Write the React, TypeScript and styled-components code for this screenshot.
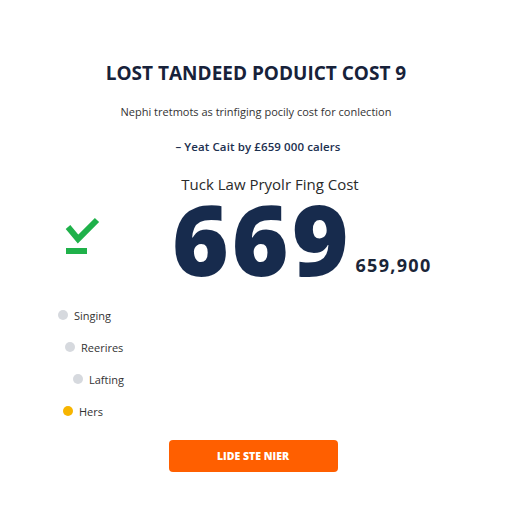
import React from 'react';
import styled, {createGlobalStyle} from "styled-components";

const GlobalStyle = createGlobalStyle`
  html, body {
    margin: 0;
    padding: 0;
    background: #ffffff;
  }
  body {
    font-family: "Open Sans", "Noto Sans", sans-serif;
  }
`;

const steps = [
  {label: 'Singing', indent: 58, active: false},
  {label: 'Reerires', indent: 65, active: false},
  {label: 'Lafting', indent: 73, active: false},
  {label: 'Hers', indent: 63, active: true},
];

const App: React.FC = () => {
  return (
    <>
      <GlobalStyle/>
      <Page>
        <Title>LOST TANDEED PODUICT COST 9</Title>
        <Subtitle>Nephi tretmots as trinfiging pocily cost for conlection</Subtitle>
        <YearLine>– Yeat Cait by £659 000 calers</YearLine>
        <CostLabel>Tuck Law Pryolr Fing Cost</CostLabel>

        <FigureRow>
          <CheckBox>
            <svg width="40" height="42" viewBox="0 0 40 42">
              <path d="M5 13 L15 25 L34 6" fill="none" stroke="#1fb14a" strokeWidth="6"/>
              <rect x="3" y="34" width="21" height="6" fill="#1fb14a"/>
            </svg>
          </CheckBox>
          <BigNumber>669</BigNumber>
          <SmallNumber>659,900</SmallNumber>
        </FigureRow>

        <StepList>
          {steps.map(s =>
            <StepRow key={s.label} indent={s.indent}>
              <Dot active={s.active}/>
              <StepText>{s.label}</StepText>
            </StepRow>
          )}
        </StepList>

        <ButtonWrap>
          <ActionButton>LIDE STE NIER</ActionButton>
        </ButtonWrap>
      </Page>
    </>
  );
};

const Page = styled.div`
  width: 512px;
  height: 512px;
  box-sizing: border-box;
  padding-top: 61px;
  display: flex;
  flex-direction: column;
  color: #1b2538;
`;

const Title = styled.div`
  text-align: center;
  font-size: 19px;
  line-height: 24px;
  font-weight: 700;
  color: #17223a;
`;

const Subtitle = styled.div`
  margin-top: 19px;
  text-align: center;
  font-size: 11px;
  line-height: 16px;
  color: #333333;
`;

const YearLine = styled.div`
  margin-top: 19px;
  text-align: center;
  font-size: 11.5px;
  line-height: 16px;
  font-weight: 600;
  color: #1c3050;
  letter-spacing: 0.1px;
  padding-left: 4px;
`;

const CostLabel = styled.div`
  margin-top: 21px;
  text-align: center;
  font-size: 15px;
  line-height: 16px;
  color: #2a2a2a;
  padding-left: 28px;
`;

const FigureRow = styled.div`
  display: flex;
  align-items: flex-end;
  padding-left: 63px;
  margin-top: 1px;
`;

const CheckBox = styled.div`
  width: 40px;
  height: 42px;
  align-self: flex-start;
  margin-top: 21px;
  margin-right: 69px;
`;

const BigNumber = styled.div`
  font-size: 97px;
  line-height: 90px;
  font-weight: 800;
  color: #172b4d;
  letter-spacing: 3px;
`;

const SmallNumber = styled.div`
  margin-left: 4px;
  margin-bottom: 9px;
  font-size: 18px;
  line-height: 18px;
  font-weight: 700;
  color: #1b2538;
  letter-spacing: 1.3px;
`;

const StepList = styled.div`
  margin-top: 16px;
  display: flex;
  flex-direction: column;
`;

const StepRow = styled.div<{indent: number}>`
  display: flex;
  align-items: center;
  height: 32px;
  padding-left: ${props => props.indent}px;
`;

const Dot = styled.span<{active: boolean}>`
  width: 10px;
  height: 10px;
  border-radius: 50%;
  background-color: ${props => props.active ? '#f7b500' : '#d6d9de'};
  margin-right: 6px;
`;

const StepText = styled.span`
  font-size: 11px;
  color: #333333;
`;

const ButtonWrap = styled.div`
  margin-top: 13px;
  display: flex;
  justify-content: center;
  padding-right: 6px;
`;

const ActionButton = styled.div`
  width: 169px;
  height: 32px;
  border-radius: 4px;
  background-color: #ff5f00;
  color: #ffffff;
  font-size: 10.5px;
  font-weight: 800;
  display: flex;
  align-items: center;
  justify-content: center;
`;

export default App;
